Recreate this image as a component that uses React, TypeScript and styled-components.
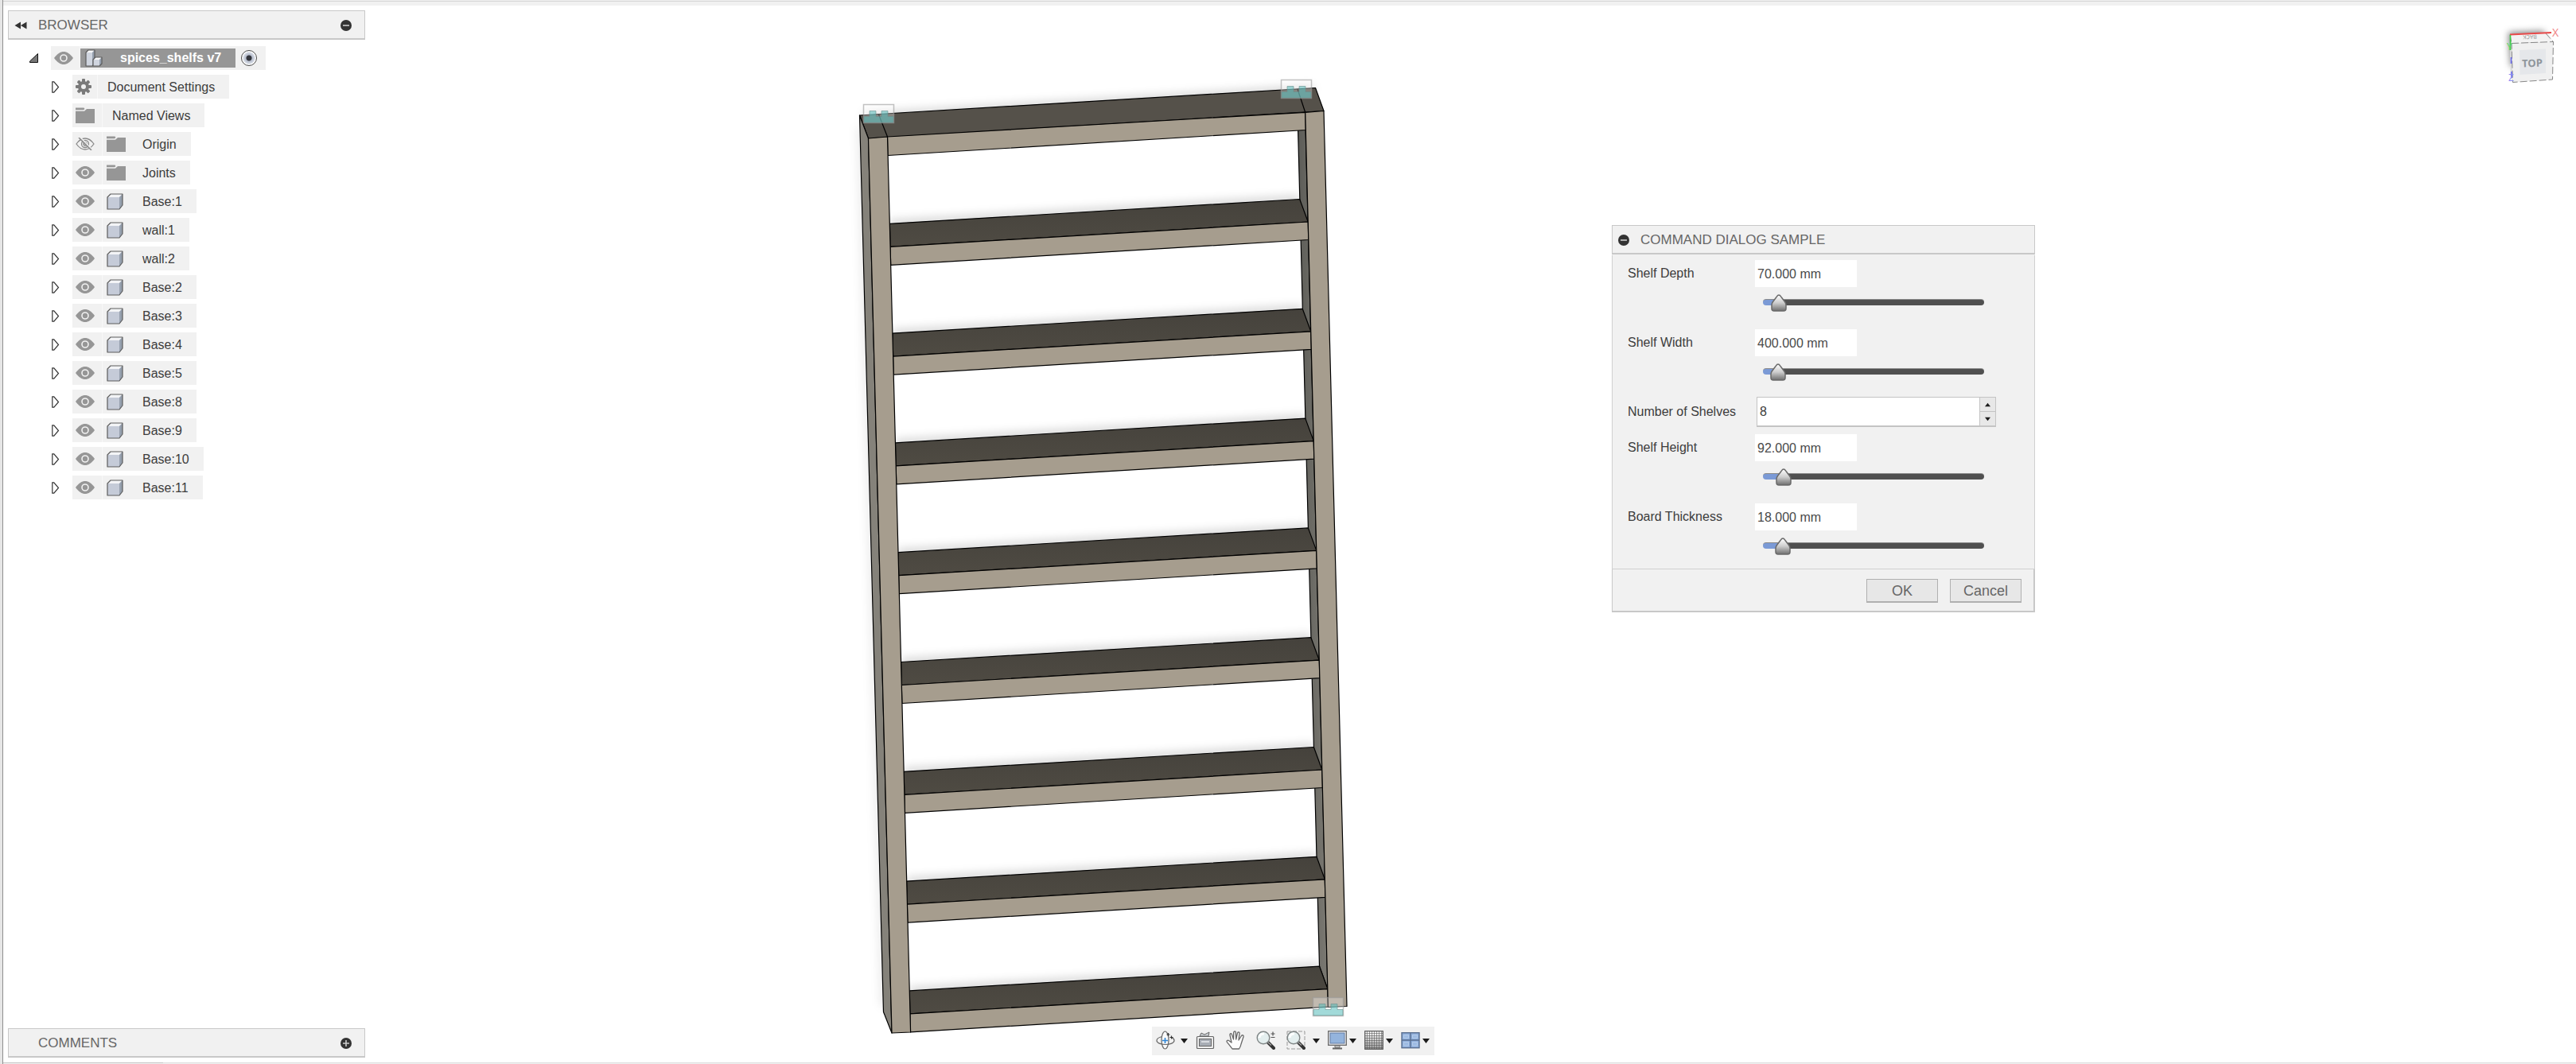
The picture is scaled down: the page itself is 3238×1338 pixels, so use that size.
import React, { useState } from "react";
import styled, { createGlobalStyle, css } from "styled-components";

const GlobalStyle = createGlobalStyle`
  *, *::before, *::after { box-sizing: border-box; }
  body {
    margin: 0;
    background: #ffffff;
    color: #3c3c3c;
    font-family: "Liberation Sans", Arial, sans-serif;
    font-size: 16px;
    line-height: 20px;
  }
  button, input { font: inherit; color: inherit; }
  button { border: 0; padding: 0; background: none; cursor: pointer; }
  svg { display: block; flex: none; }
`;

/* ---------- page frame ---------- */

const Page = styled.div`
  display: flex;
  height: 100vh;
`;

const Rail = styled.div`
  flex: none;
  width: 4px;
  background: #e6e6e6;
  border-right: 1px solid #8f8f8f;
`;

const Frame = styled.div`
  flex: 1;
  min-width: 0;
  display: flex;
  flex-direction: column;
`;

const TopStrip = styled.div`
  flex: none;
  height: 7px;
  background: #f1f1f1;
  &::before {
    content: "";
    display: block;
    height: 2px;
    border-bottom: 1px solid #d4d4d4;
  }
`;

const BottomStrip = styled.div`
  flex: none;
  display: flex;
  height: 2px;
  background: #f1f1f1;
  border-top: 1px solid #dddddd;
  &::before {
    content: "";
    width: 201px;
    height: 1px;
    margin-top: -1px;
    background: #c4c4c4;
  }
`;

const Viewport = styled.main`
  flex: 1;
  min-height: 0;
  display: grid;
  grid-template: minmax(0, 1fr) / minmax(0, 1fr);
  > * { grid-area: 1 / 1; }
`;

const Scene = styled.svg`
  width: 100%;
  height: 100%;
`;

const CubeSvg = styled.svg`
  justify-self: end;
  align-self: start;
`;

/* ---------- side panels ---------- */

const Side = styled.aside`
  justify-self: start;
  display: flex;
  flex-direction: column;
  justify-content: space-between;
  width: 449px;
  margin: 6px;
`;

const PanelHeader = styled.header`
  display: flex;
  align-items: center;
  height: 37px;
  padding: 2px 16px 0 7px;
  background: #f1f1f1;
  border: 1px solid #c8c8c8;
  border-bottom-width: 2px;
  color: #666666;
`;

const CollapseSlot = styled.button`
  width: 16px;
`;

const PanelTitle = styled.h2<{ $inset?: number }>`
  flex: 1;
  margin: 0 0 0 ${(p) => p.$inset ?? 14}px;
  font-size: 17px;
  font-weight: 400;
`;

/* ---------- tree ---------- */

const Tree = styled.ul`
  display: flex;
  flex-direction: column;
  gap: 6px;
  margin: 8px 0 0;
  padding: 0;
  list-style: none;
`;

const Item = styled.li<{ $root?: boolean }>`
  display: flex;
  align-items: center;
  height: 30px;
  padding-left: ${(p) => (p.$root ? 27 : 54)}px;
`;

const Toggle = styled.button`
  width: 27px;
`;

const ItemBox = styled.div`
  display: flex;
  align-items: center;
  align-self: stretch;
  background: #f1f1f1;
`;

const Cell = styled.button<{ $w: number }>`
  display: flex;
  align-items: center;
  align-self: stretch;
  width: ${(p) => p.$w}px;
  padding-left: 4px;
  border-right: 1px solid #f8f8f8;
`;

const Glyph = styled.span<{ $w: number }>`
  display: flex;
  width: ${(p) => p.$w}px;
  padding-left: 5px;
`;

const ItemLabel = styled.span`
  padding: 2px 18px 0 12px;
`;

const RootLabel = styled.span`
  display: flex;
  align-items: center;
  gap: 22px;
  height: 24px;
  padding: 0 18px 0 6px;
  background: #969696;
  color: #ffffff;
  font-weight: 700;
`;

const ActiveRadio = styled.input`
  appearance: none;
  width: 20px;
  height: 20px;
  margin: 0 11px 0 7px;
  border: 1px solid #4a4a4a;
  border-radius: 50%;
  background: radial-gradient(circle, #33353c 0 3px, #b5bccb 4px, #d5dae4 7px, #ffffff 8px);
`;

/* ---------- dialog ---------- */

const Dialog = styled.section`
  justify-self: end;
  align-self: start;
  width: 532px;
  margin: 276px 680px 0 0;
  background: #f1f1f1;
`;

const DialogBody = styled.div`
  display: flex;
  flex-direction: column;
  gap: 11px;
  margin-top: 1px;
  padding: 6px 47px 6px 19px;
  border: 1px solid #d0d0d0;
  border-top: 0;
`;

const Field = styled.div<{ $short?: boolean }>`
  display: grid;
  grid-template-columns: 160px 1fr;
  grid-template-rows: 34px;
  align-items: center;
  align-content: start;
  height: ${(p) => (p.$short ? 34 : 76)}px;
`;

const FieldLabel = styled.label``;

const ValueBox = styled.input`
  width: 128px;
  height: 34px;
  padding: 2px 3px 0;
  border: 0;
  background: #ffffff;
  color: #4a4a4a;
`;

const thumb = encodeURIComponent(
  `<svg xmlns="http://www.w3.org/2000/svg" width="20" height="22"><defs><linearGradient id="g" x1="0" y1="0" x2="0" y2="1"><stop offset=".1" stop-color="#f6f6f6"/><stop offset=".5" stop-color="#cccccc"/><stop offset="1" stop-color="#6e6e6e"/></linearGradient></defs><path d="M10 1C8.500 1 8 2 7 3.500L2.500 9.500Q1 11.500 1 13.500V18Q1 21 4 21H16Q19 21 19 18V13.500Q19 11.500 17.500 9.500L13 3.500C12 2 11.500 1 10 1Z" fill="url(#g)" stroke="#6a6a6a" stroke-width="1.500"/></svg>`
);

const Slider = styled.input<{ $fill: number }>`
  grid-column: 2;
  appearance: none;
  width: 278px;
  height: 22px;
  margin: 8px 0 0 10px;
  background: transparent;
  &::-webkit-slider-runnable-track {
    height: 8px;
    border-radius: 4px;
    border-top: 1px solid #8a8a8a;
    background: linear-gradient(
      to right,
      #7b9ad6 ${(p) => p.$fill + 3}%,
      #505050 ${(p) => p.$fill + 3}%
    );
  }
  &::-webkit-slider-thumb {
    appearance: none;
    width: 20px;
    height: 22px;
    margin-top: -7px;
    background: url("data:image/svg+xml,${thumb}") no-repeat;
  }
`;

const Spinner = styled.div`
  display: flex;
  width: 301px;
  height: 38px;
  margin-left: 2px;
  border: 1px solid #c4c4c4;
  border-bottom-width: 2px;
  background: #ffffff;
`;

const SpinnerInput = styled.input`
  flex: 1;
  min-width: 0;
  padding: 0 3px;
  border: 0;
  background: transparent;
`;

const SpinnerButtons = styled.div`
  display: flex;
  flex-direction: column;
  gap: 1px;
  width: 20px;
  padding-left: 1px;
  background: #c4c4c4;
`;

const SpinnerButton = styled.button`
  flex: 1;
  display: flex;
  align-items: center;
  justify-content: center;
  background: #e8e8e8;
`;

const DialogFooter = styled.footer`
  display: flex;
  justify-content: flex-end;
  gap: 15px;
  padding: 12px 15px 10px;
  border: 1px solid #c8c8c8;
  border-width: 0 2px 2px 1px;
`;

const DialogButton = styled.button`
  width: 90px;
  height: 30px;
  padding-top: 1px;
  border: 1px solid #b0b0b0;
  border-bottom-width: 2px;
  background: #e7e7e7;
  color: #666666;
  font-size: 18px;
`;

/* ---------- navigation bar ---------- */

const NavBar = styled.nav`
  justify-self: center;
  align-self: end;
  display: flex;
  align-items: center;
  gap: 8px;
  height: 36px;
  margin: 0 0 9px 8px;
  padding: 0 4px 2px 5px;
  background: #f1f1f1;
`;

const ToolGroup = styled.div<{ $gap?: number; $single?: boolean }>`
  display: flex;
  align-items: center;
  gap: ${(p) => p.$gap ?? 2}px;
  ${(p) => p.$single && css`padding-right: 6px;`}
`;

const Tool = styled.button`
  width: 24px;
  height: 24px;
`;

const Drop = styled.button`
  display: flex;
  justify-content: center;
  width: 12px;
  padding-top: 2px;
`;

/* ---------- icons ---------- */

const RoundSign = ({ plus }: { plus?: boolean }) => (
  <svg width="14" height="14" viewBox="0 0 14 14">
    <circle cx="7" cy="7" r="7" fill="#333" />
    <path d={plus ? "M3 7h8M7 3v8" : "M3 7h8"} stroke="#ccc" strokeWidth="1.600" />
  </svg>
);

const Rewind = () => (
  <svg width="16" height="10" viewBox="0 0 16 10">
    <path d="M8 .5v9L.5 5zM15.500 .5v9L8 5z" fill="#333" />
  </svg>
);

const OpenArrow = () => (
  <svg width="11" height="12" viewBox="0 0 11 12">
    <path d="M10.500 .5v11H.5V10z" fill="#777" stroke="#111" />
  </svg>
);

const ClosedArrow = () => (
  <svg width="11" height="15" viewBox="0 0 11 15">
    <path d="M1.800 .8h2L9.500 7.500 3.800 14.200h-2z" fill="#fff" stroke="#333" strokeWidth="1.200" />
  </svg>
);

const Eye = () => (
  <svg width="24" height="16" viewBox="0 0 24 16">
    <path d="M0 8C4 2.500 8 0 12 0s8 2.500 12 8c-4 5.500-8 8-12 8S4 13.500 0 8z" fill="#969696" />
    <circle cx="12" cy="8" r="4" fill="none" stroke="#f1f1f1" strokeWidth="1.600" />
  </svg>
);

const EyeOff = () => (
  <svg width="24" height="16" viewBox="0 0 24 16" fill="none" stroke="#8a8a8a" strokeWidth="1.300">
    <path d="M1 8C4.500 3 8 1 12 1s7.500 2 11 7c-3.500 5-7 7-11 7S4.500 13 1 8z" />
    <circle cx="12" cy="8" r="4.500" />
    <circle cx="12" cy="8" r="2" />
    <path d="M6 0l15 16" stroke="#f1f1f1" strokeWidth="2" />
    <path d="M4 0l16 16" strokeWidth="1.600" />
  </svg>
);

const Folder = () => (
  <svg width="24" height="20" viewBox="0 0 24 20" fill="#969696">
    <path d="M0 .5h10.500l1 1.500L10 3.200H0zM0 4.800h11L14 2h10v18H0z" />
  </svg>
);

const Gear = () => (
  <svg width="20" height="20" viewBox="-10 -10 20 20">
    {[0, 45, 90, 135].map((a) => (
      <rect key={a} x="-2" y="-10" width="4" height="20" rx="1" fill="#7a7a7a" transform={`rotate(${a})`} />
    ))}
    <circle r="7" fill="#7a7a7a" />
    <circle r="3" fill="#f1f1f1" />
  </svg>
);

const Body = () => (
  <svg width="21" height="21" viewBox="0 0 21 21">
    <path d="M1 5L5 1h15v14l-4 5H1z" fill="#c5cbd8" />
    <path d="M1 5L5 1h15l-4 4z" fill="#f3f4f6" />
    <path d="M16 5l4-4v14l-4 5z" fill="#97a1af" />
    <path d="M1 5L5 1h15v14l-4 5H1z" fill="none" stroke="#5c5c5c" strokeWidth="1.200" strokeLinejoin="round" />
  </svg>
);

const Assembly = () => (
  <svg width="22" height="22" viewBox="0 0 22 22">
    <path d="M1 4l3-3h8v17l-3 3H1z" fill="#d0d5df" />
    <path d="M1 4l3-3h8L9 4z" fill="#fafafa" />
    <path d="M9 4l3-3v17l-3 3z" fill="#97a1af" />
    <path d="M1 4l3-3h8v17l-3 3H1z" fill="none" stroke="#5c5c5c" strokeWidth="1.200" strokeLinejoin="round" />
    <path d="M10 13l3-3h8v8l-3 3h-8z" fill="#d0d5df" />
    <path d="M10 13l3-3h8l-3 3z" fill="#fafafa" />
    <path d="M18 13l3-3v8l-3 3z" fill="#97a1af" />
    <path d="M10 13l3-3h8v8l-3 3h-8z" fill="none" stroke="#5c5c5c" strokeWidth="1.200" strokeLinejoin="round" />
  </svg>
);

const Caret = ({ up, size = 9 }: { up?: boolean; size?: number }) => (
  <svg width={size} height={6} viewBox="0 0 9 6">
    <path d={up ? "M0 6h9L4.500 0z" : "M0 0h9L4.500 6z"} fill="#1c1c1c" />
  </svg>
);

const OrbitIcon = () => (
  <svg width="24" height="24" viewBox="0 0 24 24" fill="none" stroke="#666" strokeWidth="1.200">
    <ellipse cx="11.500" cy="12" rx="4.500" ry="11" fill="#fafafa" />
    <path d="M8 7.500C3 8.500 1 10.500 1 12.500c0 3 5 5 11 5s11-2 11-5c0-1.500-1-2.800-3-3.600" fill="none" />
    <path d="M11.500 9v7M8 12.500h7" stroke="#2f86d6" strokeWidth="1.600" />
    <path d="M13.500 5h4M15.500 3v4M17.500 8.500h4M19.500 6.500v4" stroke="#333" strokeWidth="1.200" />
  </svg>
);

const LookAtIcon = () => (
  <svg width="24" height="24" viewBox="0 0 24 24" fill="none" stroke="#666">
    <path d="M5 7l2-4 4 2 6-3-1 5z" fill="#ccd0d4" />
    <rect x="1.500" y="7.500" width="21" height="15" rx="1" fill="#f0f0f0" strokeWidth="1.200" />
    <rect x="4.500" y="10.500" width="15" height="9" fill="#a8adb5" stroke="#666" />
    <path d="M7 14h10" stroke="#d8dbe0" strokeWidth="2" />
  </svg>
);

const HandIcon = () => (
  <svg width="24" height="24" viewBox="0 0 24 24">
    <path
      d="M8 23C6 20 3 16.500 1.300 14.300 .5 13 2 11.500 3.500 12.500L7 15 5 5.500C4.700 3.500 7 3 7.500 5L9.500 11 9.700 2.500C9.700 .5 12.300 .5 12.300 2.500L12.700 11 14.500 3C15 1.300 17.300 1.800 17 3.700L16 12 19.500 6.500C20.500 5 22.500 6 22 7.700L19 17C18.500 20 17.500 21.500 16.500 23Z"
      fill="#fcfcfc"
      stroke="#666"
      strokeWidth="1.300"
      strokeLinejoin="round"
    />
  </svg>
);

const Lens = () => (
  <>
    <path d="M15 15l7 7" stroke="#333" strokeWidth="4" strokeLinecap="round" />
    <path d="M14 14l5 4.500" stroke="#aaa" strokeWidth="1.200" />
    <circle cx="9" cy="9" r="7.800" fill="#e4efef" stroke="#808686" strokeWidth="1.400" />
    <path d="M4 9a5 5 0 0 1 6-5" fill="none" stroke="#fff" strokeWidth="3" />
  </>
);

const ZoomIcon = () => (
  <svg width="24" height="24" viewBox="0 0 24 24">
    <Lens />
    <path d="M18.500 4h5M21 1.500v5M18.500 8.500h5" stroke="#555" strokeWidth="1.200" />
  </svg>
);

const ZoomWindowIcon = () => (
  <svg width="24" height="24" viewBox="0 0 24 24">
    <rect x="1" y="1" width="22" height="22" fill="none" stroke="#999" strokeDasharray="5 2" />
    <Lens />
  </svg>
);

const MonitorIcon = () => (
  <svg width="24" height="24" viewBox="0 0 24 24">
    <rect x=".7" y=".7" width="22.600" height="17.600" fill="#f4f4f4" stroke="#666" strokeWidth="1.300" />
    <rect x="3" y="3" width="18" height="13" fill="#94b4dd" stroke="#607ba3" />
    <path d="M9 19h6v2.500H9z" fill="#ccc" stroke="#777" />
    <path d="M6 22.500h12" stroke="#666" strokeWidth="2" />
  </svg>
);

const GridIcon = () => (
  <svg width="24" height="24" viewBox="0 0 24 24">
    <defs>
      <linearGradient id="gridFill" x1="0" y1="0" x2="0" y2="1">
        <stop offset="0" stopColor="#ffffff" />
        <stop offset="1" stopColor="#9c9c9c" />
      </linearGradient>
    </defs>
    <rect x=".7" y=".7" width="22.600" height="22.600" fill="url(#gridFill)" stroke="#555" strokeWidth="1.200" />
    <path d="M3.500 1v22M6.500 1v22M9.500 1v22M12.500 1v22M15.500 1v22M18.500 1v22M21.500 1v22M1 3.500h22M1 6.500h22M1 9.500h22M1 12.500h22M1 15.500h22M1 18.500h22M1 21.500h22" stroke="#555" strokeOpacity=".55" />
  </svg>
);

const ViewportsIcon = () => (
  <svg width="24" height="24" viewBox="0 0 24 24">
    <rect x="1" y="2.700" width="22" height="19" fill="#8eaedb" stroke="#5a6f90" strokeWidth="1.400" />
    <path d="M12 3v19M1 12h22" stroke="#5a6f90" strokeWidth="1.400" />
    <path d="M3.500 5.500h6v4h-6zM14.500 5.500h6v4h-6zM3.500 14.500h6v4.500h-6zM14.500 14.500h6v4.500h-6z" fill="#9dbbe3" stroke="#b4cbe9" />
  </svg>
);

/* ---------- 3D model ---------- */

const leftX = (y: number) => 1115.5 + ((y - 172) * 29) / 1126;
const rightX = (y: number) => 1640.7 + ((y - 141) * 28.7) / 1125;
const backX = (y: number) => 1631.5 + ((y - 165) * 27) / 1050;
const pts = (...p: number[][]) => p.map((q) => q.join(",")).join(" ");

const shelves = Array.from({ length: 8 }, (_, k) => {
  const d = 137.8 * k;
  return {
    backL: 281.3 + d,
    frontL: 310.3 + d,
    baseL: 333.3 + d,
    backR: 250.5 + d,
    frontR: 279 + d,
    baseR: 301.5 + d,
  };
});

const Joint = ({ x, y }: { x: number; y: number }) => (
  <g transform={`translate(${x} ${y})`}>
    <rect x=".5" y=".5" width="38" height="23" fill="#fff" fillOpacity=".3" stroke="#999" strokeOpacity=".6" strokeWidth="1.500" />
    <path d="M1 23V15.500H8V8.500H16V15.500H23V8.500H31V15.500H38V23Z" fill="#55bcb9" fillOpacity=".55" stroke="#6b8f8e" strokeOpacity=".6" />
  </g>
);

const Model = () => (
  <Scene viewBox="4 7 3234 1329" role="img" aria-label="Spice shelf model">
    <defs>
      <filter id="soft" x="-10%" y="-50%" width="120%" height="200%">
        <feGaussianBlur stdDeviation="6" />
      </filter>
      <linearGradient id="deck" x1="0" y1="0" x2="0" y2="1">
        <stop offset="0" stopColor="#45423c" />
        <stop offset="1" stopColor="#4f4b43" />
      </linearGradient>
      <linearGradient id="inner" x1="0" y1="0" x2="1" y2="0">
        <stop offset="0" stopColor="#5d5d58" />
        <stop offset="1" stopColor="#7b7972" />
      </linearGradient>
    </defs>
    <g filter="url(#soft)" stroke="#000" strokeOpacity=".2" strokeWidth="8" fill="none">
      <path d="M1086 146L1650 112" />
      {shelves.map((s) => (
        <path key={s.backL} d={`M${leftX(s.backL)} ${s.backL}L${backX(s.backR)} ${s.backR}`} />
      ))}
      <path d="M1082 160L1111 1265" strokeOpacity=".1" />
    </g>
    <g stroke="#000" strokeWidth="1.200" strokeLinejoin="round">
      <polygon fill="url(#inner)" points={pts([1631.5, 160], [1641, 160], [1669, 1244], [1658.5, 1215])} />
      {shelves.map((s) => (
        <g key={s.backL}>
          <polygon
            fill="url(#deck)"
            points={pts([leftX(s.backL), s.backL], [backX(s.backR), s.backR], [rightX(s.frontR), s.frontR], [leftX(s.frontL), s.frontL])}
          />
          <polygon
            fill="#a69d8e"
            points={pts([leftX(s.frontL), s.frontL], [rightX(s.frontR), s.frontR], [rightX(s.baseR), s.baseR], [leftX(s.baseL), s.baseL])}
          />
        </g>
      ))}
      <polygon fill="#55514a" points={pts([1080.5, 145], [1653.5, 110.5], [1664, 139.5], [1091.5, 174])} />
      <polygon fill="#a69d8e" points={pts([1115.5, 172], [1640.7, 141.3], [1641.3, 163.5], [1116, 195.5])} />
      <path d="M1104.500 144L1115.500 172M1631 112L1640.700 141.300" />
      <polygon fill="#85827a" points={pts([1080.5, 145], [1091.5, 174], [1121, 1299], [1110.5, 1272.5])} />
      <polygon fill="#a69d8e" points={pts([1091.5, 174], [1115.5, 172], [1144.6, 1298], [1121, 1299])} />
      <polygon fill="#a69d8e" points={pts([1640.7, 141.3], [1664, 139.5], [1693, 1265.5], [1669.4, 1266.5])} />
    </g>
    <Joint x={1085} y={131} />
    <Joint x={1610} y={100} />
    <Joint x={1650} y={1254} />
  </Scene>
);

const ViewCube = () => (
  <CubeSvg width="138" height="123" viewBox="0 7 138 123" fontFamily="Noto Sans, sans-serif" role="img" aria-label="View cube">
    <defs>
      <filter id="cubeShadow" x="-30%" y="-30%" width="160%" height="160%">
        <feGaussianBlur stdDeviation="4" />
      </filter>
    </defs>
    <path d="M53 41L98 39V70L56 84z" fill="#000" fillOpacity=".5" filter="url(#cubeShadow)" />
    <path d="M55 43.500L100 42 109.500 52.500 57 54.500z" fill="#f3f3f3" />
    <path d="M55 43.500L57 54.500 58.500 103.500 55.500 95z" fill="#dedede" />
    <path d="M57 54.500L109.500 52.500 108.500 100 58.500 103.500z" fill="#f0f0f0" />
    <path d="M67 63L100 61.500V92L67.500 94z" fill="#e5e7ea" />
    <path d="M57 54.500L109.500 52.500 108.500 100 58.500 103.500zM100 42L109.500 52.500M55 43.500L57 54.500" fill="none" stroke="#888" strokeDasharray="9 3" />
    <path d="M55 43.500L107 41" stroke="#e84a4a" strokeWidth="1.800" />
    <path d="M55.500 44V63" stroke="#3fcf4a" strokeWidth="1.600" />
    <path d="M56.500 72V80M57 90V98" stroke="#6a6af0" strokeWidth="1.600" />
    <text x="83" y="84" textAnchor="middle" fontSize="13" fontWeight="700" fill="#8e959b" transform="rotate(-2 83 79)">TOP</text>
    <text x="80" y="50" textAnchor="middle" fontSize="7" fill="#999" transform="rotate(178 80 47)">BACK</text>
    <text x="108" y="46" fontSize="14" fill="#f08a8a">X</text>
    <text x="51" y="63" fontSize="12" fill="#5cd866">Y</text>
    <text x="53" y="102" fontSize="12" fill="#8c8cf2">Z</text>
  </CubeSvg>
);

/* ---------- browser tree ---------- */

type Node = { label: string; kind: "settings" | "views" | "folder" | "body"; hidden?: boolean };

const nodes: Node[] = [
  { label: "Document Settings", kind: "settings" },
  { label: "Named Views", kind: "views" },
  { label: "Origin", kind: "folder", hidden: true },
  { label: "Joints", kind: "folder" },
  ...["Base:1", "wall:1", "wall:2", "Base:2", "Base:3", "Base:4", "Base:5", "Base:8", "Base:9", "Base:10", "Base:11"].map(
    (label): Node => ({ label, kind: "body" })
  ),
];

const TreeItem = ({ node }: { node: Node }) => (
  <Item>
    <Toggle aria-label={`Expand ${node.label}`}>
      <ClosedArrow />
    </Toggle>
    <ItemBox>
      {node.kind === "settings" && <Cell $w={32} aria-label="Settings"><Gear /></Cell>}
      {node.kind === "views" && <Cell $w={38} aria-label="Views"><Folder /></Cell>}
      {(node.kind === "folder" || node.kind === "body") && (
        <>
          <Cell $w={38} aria-label={`Show or hide ${node.label}`}>{node.hidden ? <EyeOff /> : <Eye />}</Cell>
          <Glyph $w={38}>{node.kind === "folder" ? <Folder /> : <Body />}</Glyph>
        </>
      )}
      <ItemLabel>{node.label}</ItemLabel>
    </ItemBox>
  </Item>
);

/* ---------- dialog fields ---------- */

type SliderFieldProps = { id: string; label: string; initial: number; max: number };

const SliderField = ({ id, label, initial, max }: SliderFieldProps) => {
  const [value, setValue] = useState(initial);
  return (
    <Field>
      <FieldLabel htmlFor={id}>{label}</FieldLabel>
      <ValueBox
        id={id}
        value={`${value.toFixed(3)} mm`}
        onChange={(e) => setValue(parseFloat(e.target.value) || 0)}
      />
      <Slider
        type="range"
        aria-label={`${label} slider`}
        min={0}
        max={max}
        value={value}
        $fill={(value / max) * 100}
        onChange={(e) => setValue(Number(e.target.value))}
      />
    </Field>
  );
};

const CountField = () => {
  const [count, setCount] = useState(8);
  return (
    <Field $short>
      <FieldLabel htmlFor="count">Number of Shelves</FieldLabel>
      <Spinner>
        <SpinnerInput id="count" value={count} onChange={(e) => setCount(parseInt(e.target.value, 10) || 0)} />
        <SpinnerButtons>
          <SpinnerButton aria-label="More shelves" onClick={() => setCount(count + 1)}><Caret up size={7} /></SpinnerButton>
          <SpinnerButton aria-label="Fewer shelves" onClick={() => setCount(count - 1)}><Caret size={7} /></SpinnerButton>
        </SpinnerButtons>
      </Spinner>
    </Field>
  );
};

export default function App() {
  return (
    <Page>
      <GlobalStyle />
      <Rail />
      <Frame>
        <TopStrip />
        <Viewport>
          <Model />
          <Side>
            <div>
              <PanelHeader>
                <CollapseSlot aria-label="Collapse browser"><Rewind /></CollapseSlot>
                <PanelTitle>BROWSER</PanelTitle>
                <button aria-label="Minimise browser"><RoundSign /></button>
              </PanelHeader>
              <Tree>
                <Item $root>
                  <Toggle aria-label="Collapse spices_shelfs"><OpenArrow /></Toggle>
                  <ItemBox>
                    <Cell $w={37} aria-label="Show or hide spices_shelfs"><Eye /></Cell>
                    <RootLabel><Assembly />spices_shelfs v7</RootLabel>
                    <ActiveRadio type="radio" name="active" defaultChecked aria-label="Activate component" />
                  </ItemBox>
                </Item>
                {nodes.map((n) => <TreeItem key={n.label} node={n} />)}
              </Tree>
            </div>
            <PanelHeader>
              <PanelTitle $inset={30}>COMMENTS</PanelTitle>
              <button aria-label="Expand comments"><RoundSign plus /></button>
            </PanelHeader>
          </Side>
          <Dialog aria-label="Command dialog sample">
            <PanelHeader>
              <button aria-label="Minimise dialog"><RoundSign /></button>
              <PanelTitle>COMMAND DIALOG SAMPLE</PanelTitle>
            </PanelHeader>
            <DialogBody>
              <SliderField id="depth" label="Shelf Depth" initial={70} max={1800} />
              <SliderField id="width" label="Shelf Width" initial={400} max={11400} />
              <CountField />
              <SliderField id="height" label="Shelf Height" initial={92} max={1500} />
              <SliderField id="thickness" label="Board Thickness" initial={18} max={310} />
            </DialogBody>
            <DialogFooter>
              <DialogButton>OK</DialogButton>
              <DialogButton>Cancel</DialogButton>
            </DialogFooter>
          </Dialog>
          <ViewCube />
          <NavBar aria-label="Navigation">
            <ToolGroup $gap={6}><Tool aria-label="Orbit"><OrbitIcon /></Tool><Drop aria-label="Orbit options"><Caret /></Drop></ToolGroup>
            <ToolGroup $single><Tool aria-label="Look at"><LookAtIcon /></Tool></ToolGroup>
            <ToolGroup $single><Tool aria-label="Pan"><HandIcon /></Tool></ToolGroup>
            <ToolGroup $single><Tool aria-label="Zoom"><ZoomIcon /></Tool></ToolGroup>
            <ToolGroup $gap={8}><Tool aria-label="Zoom window"><ZoomWindowIcon /></Tool><Drop aria-label="Zoom options"><Caret /></Drop></ToolGroup>
            <ToolGroup><Tool aria-label="Display settings"><MonitorIcon /></Tool><Drop aria-label="Display options"><Caret /></Drop></ToolGroup>
            <ToolGroup><Tool aria-label="Grid and snaps"><GridIcon /></Tool><Drop aria-label="Grid options"><Caret /></Drop></ToolGroup>
            <ToolGroup><Tool aria-label="Viewports"><ViewportsIcon /></Tool><Drop aria-label="Viewport options"><Caret /></Drop></ToolGroup>
          </NavBar>
        </Viewport>
        <BottomStrip />
      </Frame>
    </Page>
  );
}
